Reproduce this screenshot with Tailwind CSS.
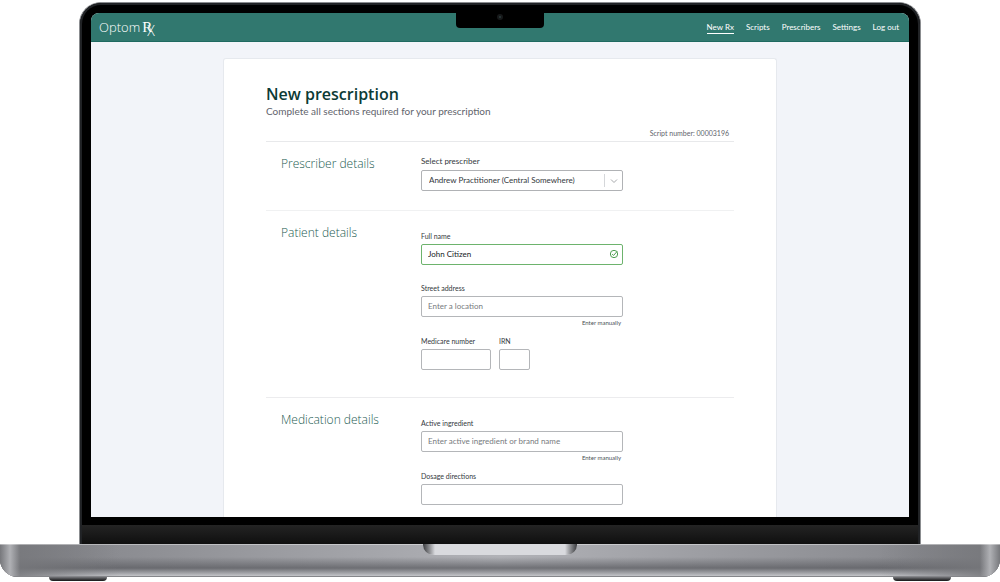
<!DOCTYPE html>
<html lang="en">
<head>
<meta charset="utf-8">
<meta name="viewport" content="width=device-width, initial-scale=1">
<title>OptomRx – New prescription</title>
<script src="https://cdn.jsdelivr.net/npm/@tailwindcss/browser@4"></script>
</head>
<body class="flex h-screen flex-col overflow-hidden bg-white pt-[2px] font-['Lato','Open_Sans',sans-serif] text-[7px] leading-3 text-[#33383d]">

<!-- Laptop lid -->
<div class="relative mx-[79px] flex min-h-0 flex-1 flex-col rounded-t-[22px] border border-b-0 border-[#8b8d90] bg-black">
  <div class="flex min-h-0 flex-1 flex-col rounded-t-[21px] border-2 border-b-0 border-[#212326] px-[9px] pt-2">

    <!-- Screen -->
    <div class="flex min-h-0 flex-1 flex-col overflow-hidden rounded-t-lg bg-[#f2f4f9]">
      <header class="flex h-[29px] shrink-0 items-center justify-between border-b border-[#1f6a61] bg-[#31786f] pr-[10px] pl-2 text-white">
        <a href="#" class="flex items-center font-['Open_Sans',sans-serif] font-light" aria-label="OptomRx">
          <span class="text-[13px] leading-5">Optom</span>
          <span class="relative ml-[2px] font-['Liberation_Serif',serif] text-[15px] leading-5">R<span class="absolute top-1 left-[5px] font-['Open_Sans',sans-serif] text-[14px]">X</span></span>
        </a>
        <nav class="flex gap-3 text-[8px]">
          <a href="#" aria-current="page" class="border-b border-white">New Rx</a>
          <a href="#" class="border-b border-transparent">Scripts</a>
          <a href="#" class="border-b border-transparent">Prescribers</a>
          <a href="#" class="border-b border-transparent">Settings</a>
          <a href="#" class="border-b border-transparent">Log out</a>
        </nav>
      </header>

      <main class="flex min-h-0 flex-1 flex-col px-[132px] pt-4">
        <form class="min-h-0 flex-1 overflow-hidden rounded-t-[3px] border border-b-0 border-[#e6e9ee] bg-white px-[42px] pt-[25px]">
          <h1 class="font-['Open_Sans',sans-serif] text-[16px] leading-5 font-semibold text-[#0c3b35]">New prescription</h1>
          <p class="text-[10px] leading-[14px] text-[#5f646c]">Complete all sections required for your prescription</p>
          <p class="mt-[9px] mb-[2px] pr-[5px] text-right text-[#5f646c]">Script number: 00003196</p>

          <section class="flex border-t border-[#e8e9eb] pt-3 pb-[19px] pl-[15px]">
            <h2 class="w-[140px] shrink-0 font-['Open_Sans',sans-serif] text-[12px] leading-5 font-light text-[#1d5c52]">Prescriber details</h2>
            <div class="flex w-[202px] flex-col">
              <label for="prescriber" class="mt-px text-[8px]">Select prescriber</label>
              <div class="relative mt-[3px] flex">
                <select id="prescriber" class="h-[21px] w-full appearance-none rounded-xs border border-[#b0b2b5] bg-white pb-px pl-[7px] text-[8px]">
                  <option>Andrew Practitioner (Central Somewhere)</option>
                </select>
                <span class="pointer-events-none absolute inset-y-1 right-0 flex w-[19px] items-center justify-center border-l border-[#d5d7da]">
                  <svg class="h-[6px] w-[8px]" viewBox="0 0 8 6" fill="none" stroke="#a6a8ab"><path d="M1 1.500 4 4.500l3-3"/></svg>
                </span>
              </div>
            </div>
          </section>

          <section class="flex border-t border-[#f0f1f2] pt-3 pb-[27px] pl-[15px]">
            <h2 class="w-[140px] shrink-0 font-['Open_Sans',sans-serif] text-[12px] leading-5 font-light text-[#1d5c52]">Patient details</h2>
            <div class="flex w-[202px] flex-col pt-[7px]">
              <label for="name">Full name</label>
              <div class="relative mt-[2px] flex">
                <input id="name" type="text" value="John Citizen" class="h-[21px] w-full rounded-xs border border-[#6db36d] bg-white px-[6px] pb-px text-[8px] text-[#16191c]">
                <svg class="absolute top-[5px] right-[4px] size-[10px]" viewBox="0 0 9 9" fill="none" stroke="#4f9f52"><circle cx="4.500" cy="4.500" r="3.300" stroke-width=".9"/><path d="m2.800 4.500 1.300 1.300 3.200-3.600" stroke-width=".9"/></svg>
              </div>
              <label for="street" class="mt-[17px]">Street address</label>
              <input id="street" type="text" placeholder="Enter a location" class="mt-[2px] h-[21px] w-full rounded-xs border border-[#b4b6b9] bg-white px-[6px] pb-px text-[8px] placeholder:text-[#777a7e]">
              <a href="#" class="self-end pr-[2px] text-[6px] text-[#4b5056]">Enter manually</a>
              <div class="mt-[6px] flex gap-2">
                <div class="flex w-[70px] flex-col gap-[2px]">
                  <label for="medicare">Medicare number</label>
                  <input id="medicare" type="text" class="h-[21px] w-full rounded-xs border border-[#b4b6b9] bg-white px-[6px] pb-px text-[8px]">
                </div>
                <div class="flex w-[31px] flex-col gap-[2px]">
                  <label for="irn">IRN</label>
                  <input id="irn" type="text" class="h-[21px] w-full rounded-xs border border-[#b4b6b9] bg-white px-[6px] pb-px text-[8px]">
                </div>
              </div>
            </div>
          </section>

          <section class="flex border-t border-[#ececee] pt-3 pb-[27px] pl-[15px]">
            <h2 class="w-[140px] shrink-0 font-['Open_Sans',sans-serif] text-[12px] leading-5 font-light text-[#1d5c52]">Medication details</h2>
            <div class="flex w-[202px] flex-col pt-[7px]">
              <label for="ingredient">Active ingredient</label>
              <input id="ingredient" type="text" placeholder="Enter active ingredient or brand name" class="mt-[2px] h-[21px] w-full rounded-xs border border-[#b4b6b9] bg-white px-[6px] pb-px text-[8px] placeholder:text-[#777a7e]">
              <a href="#" class="self-end pr-[2px] text-[6px] text-[#4b5056]">Enter manually</a>
              <label for="dosage" class="mt-[6px]">Dosage directions</label>
              <input id="dosage" type="text" class="mt-[2px] h-[21px] w-full rounded-xs border border-[#b4b6b9] bg-white px-[6px] pb-px text-[8px]">
            </div>
          </section>
        </form>
      </main>
    </div>
    <div class="h-2 shrink-0"></div>
  </div>
  <!-- Chin below the screen -->
  <div class="h-[19px] shrink-0 border-x-2 border-[#212326] bg-linear-to-b from-[#242424] to-[#0f0f0f]"></div>

  <!-- Camera notch -->
  <div class="absolute top-[2px] left-1/2 flex h-[23px] w-[88px] -translate-x-1/2 justify-center rounded-b-[4px] bg-black pt-[9px]">
    <div class="flex size-[6px] items-center justify-center rounded-full bg-[#17191a]"><div class="size-[2px] rounded-full bg-[#2c3d3e]"></div></div>
  </div>
</div>

<!-- Laptop base -->
<div class="relative h-[33px] shrink-0 overflow-hidden rounded-b-[18px] bg-linear-to-r from-[#808186] via-[#b1b2b7] to-[#808186]">
  <div class="absolute inset-x-0 top-[13px] h-[11px] bg-linear-to-b from-transparent to-[#606166]/80"></div>
  <div class="absolute inset-x-0 top-[24px] h-[8px] bg-linear-to-b from-[#606166]/80 to-[#c4c5c9]"></div>
  <div class="absolute inset-y-0 left-0 w-[120px] bg-linear-to-r from-[#77787c] via-[#77787c]/80 via-20% to-transparent"></div>
  <div class="absolute inset-y-0 right-0 w-[120px] bg-linear-to-l from-[#77787c] via-[#77787c]/80 via-20% to-transparent"></div>
  <div class="absolute inset-y-0 left-0 w-5 bg-linear-to-r from-[#77787c] via-[#b0b1b5] to-transparent"></div>
  <div class="absolute inset-y-0 right-0 w-5 bg-linear-to-l from-[#77787c] via-[#b0b1b5] to-transparent"></div>
  <div class="absolute inset-x-0 top-0 h-px bg-white/40"></div>
  <div class="absolute inset-x-0 bottom-0 h-px bg-[#85868a]"></div>
  <div class="absolute top-0 left-1/2 flex h-[11px] w-[154px] -translate-x-1/2 justify-between overflow-hidden rounded-b-[10px] bg-[#d9dade]">
    <div class="w-3 bg-linear-to-r from-[#3c3d40] to-[#d9dade]"></div>
    <div class="w-3 bg-linear-to-l from-[#3c3d40] to-[#d9dade]"></div>
  </div>
</div>

<!-- Feet -->
<div class="flex h-[5px] shrink-0 justify-between px-[49px]">
  <div class="h-1 w-[58px] rounded-b-[5px] bg-linear-to-b from-[#77787c] to-[#161617]"></div>
  <div class="h-1 w-[58px] rounded-b-[5px] bg-linear-to-b from-[#77787c] to-[#161617]"></div>
</div>
</body>
</html>
